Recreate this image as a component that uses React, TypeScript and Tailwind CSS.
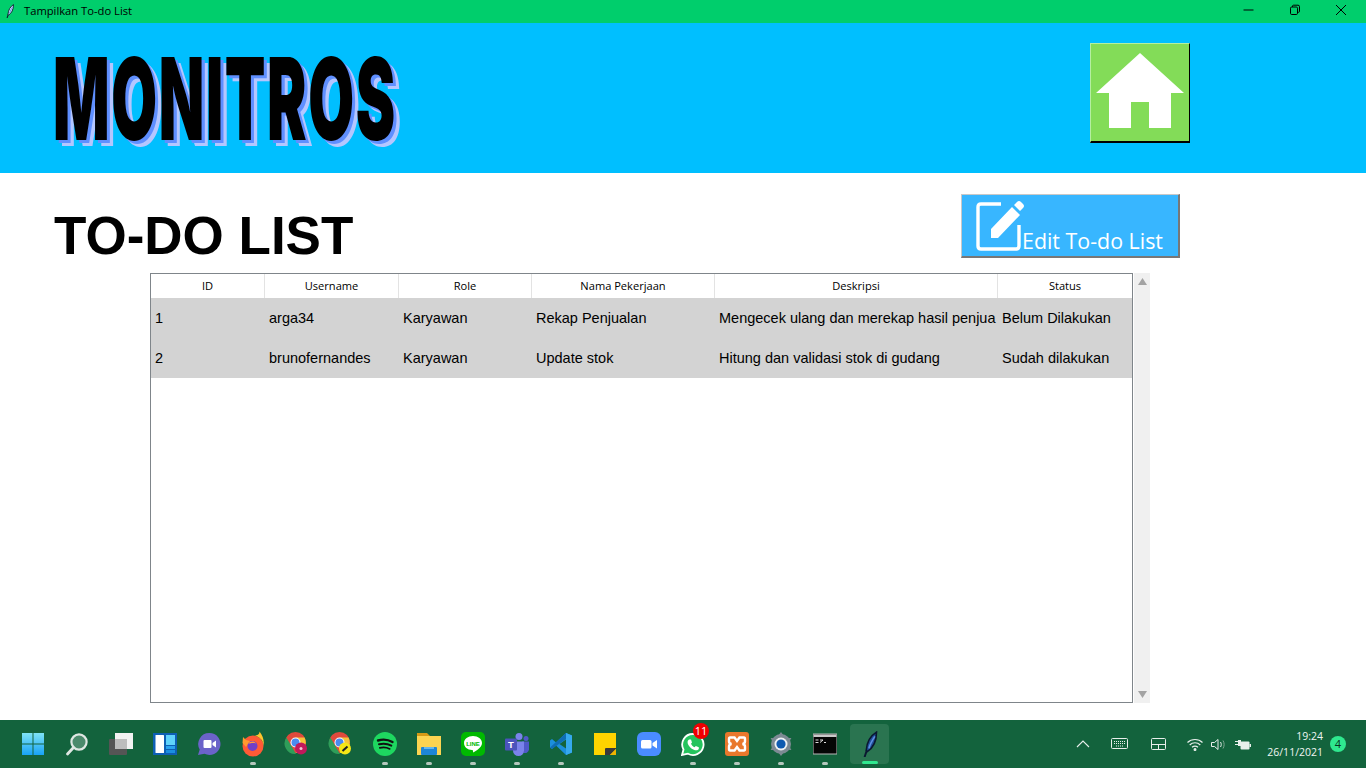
import type { ReactNode } from "react";

const columns = [
  { label: "ID", width: "w-[114px]" },
  { label: "Username", width: "w-[134px]" },
  { label: "Role", width: "w-[133px]" },
  { label: "Nama Pekerjaan", width: "w-[183px]" },
  { label: "Deskripsi", width: "w-[283px]" },
  { label: "Status", width: "w-[134px]" },
];

const rows = [
  ["1", "arga34", "Karyawan", "Rekap Penjualan", "Mengecek ulang dan merekap hasil penjua", "Belum Dilakukan"],
  ["2", "brunofernandes", "Karyawan", "Update stok", "Hitung dan validasi stok di gudang", "Sudah dilakukan"],
];

function Feather({ size = 14, fill = "#cfe0ff", vein = "#5f8fe0" }: { size?: number; fill?: string; vein?: string }) {
  return (
    <svg width={size} height={size} viewBox="0 0 24 24">
      <path d="M18 1C13 4 9 10 8.5 18l1 1c5-3 8.500-9 8.500-18z" fill={fill} stroke="#0b1830" strokeWidth="1.5" />
      <path d="M16.5 5c-2 3-4.500 7-5.500 11" fill="none" stroke={vein} strokeWidth="1.5" />
      <path d="M9 18L7 24" stroke="#0b1830" strokeWidth="1.8" />
    </svg>
  );
}

function TitleBar() {
  return (
    <div className="flex h-[23px] items-center justify-between bg-[#00ce6c]">
      <div className="flex items-center pl-[3px]">
        <Feather />
        <span className="ml-[7px] font-['Open_Sans',sans-serif] text-[11.2px] text-black">Tampilkan To-do List</span>
      </div>
      <div className="mt-[-3px] flex items-center pr-[2px] text-black">
        <div className="flex w-[46px] justify-center">
          <svg width="12" height="12" viewBox="0 0 12 12"><path d="M0.5 6h10" stroke="currentColor" /></svg>
        </div>
        <div className="flex w-[46px] justify-center">
          <svg width="12" height="12" viewBox="0 0 12 12" fill="none" stroke="currentColor">
            <rect x="1.5" y="3" width="7" height="7.5" rx="1.2" />
            <path d="M3.5 3V2.2q0-1 1-1h4.500q1.500 0 1.500 1.500v4.600q0 1-1 1h-1" />
          </svg>
        </div>
        <div className="flex w-[46px] justify-center">
          <svg width="12" height="12" viewBox="0 0 12 12"><path d="M1 1l10 10M11 1L1 11" stroke="currentColor" /></svg>
        </div>
      </div>
    </div>
  );
}

function Header() {
  return (
    <div className="flex h-[150px] items-start justify-between bg-[#00bfff] pl-[53px] pr-[176px]">
      <div className="mt-[21px] w-[343px] whitespace-nowrap">
        <span className="inline-block origin-left scale-x-[0.52] font-['Inter',sans-serif] text-[114px] leading-[110px] font-black tracking-[3px] text-black [text-shadow:6px_3px_0_#5f8fff,12px_6px_0_#b4c6ff]">
          MONITROS
        </span>
      </div>
      <button className="mt-[20px] flex h-[100px] w-[100px] items-center justify-center border-t border-r border-b-2 border-l border-t-[#b5efa0] border-r-black border-b-black border-l-[#b5efa0] bg-[#83dc58]">
        <svg width="98" height="97" viewBox="0 0 98 97" className="shrink-0">
          <path d="M49 9L93 49H80V84H58V58H40V84H18V49H5z" fill="#fff" />
        </svg>
      </button>
    </div>
  );
}

function TitleRow() {
  return (
    <div className="flex h-[100px] items-start justify-between pl-[54px] pr-[186px]">
      <h1 className="mt-[31px] font-['Liberation_Sans',sans-serif] text-[53px] leading-[64px] font-bold text-black">TO-DO LIST</h1>
      <button className="mt-[21px] flex h-[64px] w-[219px] items-end border-t border-r-2 border-b-2 border-l border-t-[#c8c8c8] border-r-[#777] border-b-[#777] border-l-[#c8c8c8] bg-[#38b6ff] pl-[14px] pb-[4px] text-white">
        <svg width="48" height="54" viewBox="0 0 48 54" fill="none" className="shrink-0">
          <path d="M25 6H5q-3 0-3 3v39q0 3 3 3h35q3 0 3-3V27" stroke="#fff" strokeWidth="3.4" />
          <path d="M15 40V31L36 9l8 8-22 23z M38 7l3-3q2-2 4 0l2 2q2 2 0 4l-3 3z" fill="#fff" />
        </svg>
        <span className="mb-[-3px] ml-[-2px] font-['Open_Sans',sans-serif] text-[21.4px] leading-[28px] font-medium whitespace-nowrap">Edit To-do List</span>
      </button>
    </div>
  );
}

function DataTable() {
  return (
    <div className="flex h-[430px] w-[1000px]">
      <div className="flex w-[983px] flex-col overflow-hidden border border-[#7f858a] bg-white">
        <div className="flex h-[24px] shrink-0">
          {columns.map((col) => (
            <div key={col.label} className={`${col.width} flex items-center justify-center border-r border-[#e3e3e3] font-['Open_Sans',sans-serif] text-[11.1px] text-black last:border-r-0`}>
              {col.label}
            </div>
          ))}
        </div>
        {rows.map((row) => (
          <div key={row[0]} className="flex h-[40px] shrink-0 bg-[#d3d3d3]">
            {row.map((cell, i) => (
              <div key={i} className={`${columns[i].width} overflow-hidden pl-[4px] font-['Liberation_Sans',sans-serif] text-[14.5px] leading-[40px] whitespace-nowrap text-black`}>
                {cell}
              </div>
            ))}
          </div>
        ))}
      </div>
      <div className="ml-[1px] flex w-[16px] flex-col items-center justify-between bg-[#f0f0f0] py-[5px]">
        <svg width="9" height="7" viewBox="0 0 9 7"><path d="M4.5 0L9 7H0z" fill="#a3a3a3" /></svg>
        <svg width="9" height="7" viewBox="0 0 9 7"><path d="M0 0h9L4.5 7z" fill="#a3a3a3" /></svg>
      </div>
    </div>
  );
}

function Chrome({ badge }: { badge: ReactNode }) {
  return (
    <svg width="26" height="26" viewBox="0 0 26 26">
      <circle cx="11.5" cy="11.5" r="10.5" fill="#df4a3c" />
      <path d="M2.4 6.5L8 16l4 6.900A10.500 10.500 0 0 1 2.4 6.5z" fill="#2f9e59" />
      <path d="M11.5 6.5h9A10.500 10.500 0 0 1 12 22z" fill="#f6c338" />
      <circle cx="11.5" cy="11.5" r="5" fill="#fff" />
      <circle cx="11.5" cy="11.5" r="4" fill="#4a8bf0" />
      {badge}
    </svg>
  );
}

const taskIcons: { id: string; dot?: boolean; node: ReactNode }[] = [
  {
    id: "start",
    node: (
      <svg width="24" height="24" viewBox="0 0 24 24">
        <defs>
          <linearGradient id="win" x1="0" y1="0" x2="0" y2="1">
            <stop offset="0" stopColor="#7fe3f5" />
            <stop offset="1" stopColor="#18a3f5" />
          </linearGradient>
        </defs>
        <path d="M1 1h10.5v10.5H1zM12.5 1H23v10.5H12.5zM1 12.5h10.5V23H1zM12.5 12.5H23V23H12.5z" fill="url(#win)" />
      </svg>
    ),
  },
  {
    id: "search",
    node: (
      <svg width="24" height="24" viewBox="0 0 24 24">
        <circle cx="14" cy="10" r="7.6" fill="#4b8a6c" stroke="#dfe7e3" strokeWidth="2.2" />
        <path d="M8.5 15.5L2.5 22" stroke="#dfe7e3" strokeWidth="2.8" strokeLinecap="round" />
      </svg>
    ),
  },
  {
    id: "taskview",
    node: (
      <svg width="24" height="24" viewBox="0 0 24 24">
        <rect x="0" y="7" width="18" height="16" rx="1" fill="#555" />
        <rect x="6" y="1" width="18" height="16" fill="#f2f2f2" />
        <rect x="6" y="7" width="12" height="10" fill="#bdbdbd" />
      </svg>
    ),
  },
  {
    id: "widgets",
    node: (
      <svg width="24" height="24" viewBox="0 0 24 24">
        <rect width="24" height="22" y="1" fill="#0d5fb4" />
        <rect x="2.5" y="3" width="8.5" height="18" rx="0.5" fill="#fff" />
        <rect x="13" y="3" width="9" height="10" fill="#5fd3fb" />
        <rect x="13" y="14" width="9" height="3" fill="#2aa3ee" />
        <rect x="13" y="18" width="9" height="3" fill="#1b8fe0" />
      </svg>
    ),
  },
  {
    id: "meet",
    node: (
      <svg width="24" height="24" viewBox="0 0 24 24">
        <path d="M12.5 1a11 11 0 1 1-5 20.800L1 23l1.700-5.500A11 11 0 0 1 12.5 1z" fill="#6b63c9" />
        <rect x="6.5" y="8" width="8" height="8" rx="1" fill="#fff" />
        <path d="M15.5 11l3.500-2.500v7L15.5 13z" fill="#fff" />
      </svg>
    ),
  },
  {
    id: "firefox",
    dot: true,
    node: (
      <svg width="24" height="26" viewBox="0 0 24 26">
        <circle cx="12" cy="15" r="10.5" fill="#ff5a36" />
        <path d="M12 4.5c5 0 10.500 4 10.500 10.500 1-5-.5-10-4-14.500 0 3-2 4-6.500 4z" fill="#ffc42e" />
        <path d="M1.5 12L2 6l3 3 4 1-4 6z" fill="#ff9a2e" />
        <circle cx="11.5" cy="15" r="5" fill="#6f3fc7" />
        <path d="M7 12.5c2-2 6-3 8 0-3-1-5 0-8 0z" fill="#ff9a3a" />
      </svg>
    ),
  },
  {
    id: "chrome-a",
    node: <Chrome badge={<g><circle cx="17" cy="17.5" r="6" fill="#c2185b" /><circle cx="17" cy="17.5" r="1.5" fill="#f4c2d6" /></g>} />,
  },
  {
    id: "chrome-b",
    node: <Chrome badge={<g><circle cx="17" cy="17.5" r="6" fill="#f6e616" /><path d="M14.5 20l5-4.500" stroke="#222" strokeWidth="2" /></g>} />,
  },
  {
    id: "spotify",
    dot: true,
    node: (
      <svg width="24" height="24" viewBox="0 0 24 24" fill="none">
        <circle cx="12" cy="12" r="12" fill="#1ed760" />
        <path d="M5 8.5c5-1.500 10-1 14.500 1.500" stroke="#111" strokeWidth="2.4" strokeLinecap="round" />
        <path d="M6 12.3c4.500-1.200 8.500-.7 12.300 1.300" stroke="#111" strokeWidth="2" strokeLinecap="round" />
        <path d="M6.8 15.8c3.800-.9 7-.5 10 1.100" stroke="#111" strokeWidth="1.7" strokeLinecap="round" />
      </svg>
    ),
  },
  {
    id: "explorer",
    dot: true,
    node: (
      <svg width="24" height="24" viewBox="0 0 24 24">
        <path d="M0 1h10l3 3H0z" fill="#d49a16" />
        <rect y="4" width="24" height="19" fill="#fbd451" />
        <rect x="4" y="15" width="16" height="8" rx="1" fill="#1d86d6" />
        <rect x="7" y="15" width="10" height="2" fill="#63b8ee" />
      </svg>
    ),
  },
  {
    id: "line",
    dot: true,
    node: (
      <svg width="24" height="24" viewBox="0 0 24 24">
        <rect width="24" height="24" rx="5" fill="#00b900" />
        <path d="M12 4c5 0 9 3 9 7 0 4-5 7.500-9 9.500 0-1.500.5-2.500-1-2.500-4.500 0-8-3-8-7s4-7 9-7z" fill="#fff" />
        <text x="12" y="13.5" textAnchor="middle" fontSize="6" fontWeight="700" fontFamily="Liberation Sans" fill="#00b900">LINE</text>
      </svg>
    ),
  },
  {
    id: "teams",
    dot: true,
    node: (
      <svg width="24" height="24" viewBox="0 0 24 24">
        <circle cx="14" cy="4.5" r="3.5" fill="#7b83eb" />
        <circle cx="21" cy="6.5" r="2.5" fill="#5059c9" />
        <path d="M17 9.5h7v8a4 4 0 0 1-6 3z" fill="#5059c9" />
        <path d="M8 9.5h11v9a5.500 5.500 0 0 1-11 0z" fill="#7b83eb" />
        <rect y="6.5" width="12" height="12" rx="1" fill="#4b53bc" />
        <text x="6" y="16" textAnchor="middle" fontSize="9.5" fontWeight="700" fontFamily="Liberation Sans" fill="#fff">T</text>
      </svg>
    ),
  },
  {
    id: "vscode",
    dot: true,
    node: (
      <svg width="24" height="24" viewBox="0 0 24 24">
        <path d="M17 1l6 2.500v17L17 23 7 13.500l-4 3.500-2-1.500V8.500L3 7l4 3.500z" fill="#1c8fdc" />
        <path d="M17 1l6 2.500v17L17 23z" fill="#36a9ee" />
        <path d="M17 7.5L10.500 12l6.500 4.500z" fill="#14633c" />
        <path d="M1 15.5L17 1v6L3 17z" fill="#0f6db3" />
      </svg>
    ),
  },
  {
    id: "notes",
    node: (
      <svg width="24" height="24" viewBox="0 0 24 24">
        <rect x="1" y="1" width="22" height="22" fill="#ffd400" />
        <path d="M12 23v-6q0-1 1-1h10v1l-6 6z" fill="#3a3a3a" />
        <path d="M17 23l6-6v6z" fill="#f0b400" />
      </svg>
    ),
  },
  {
    id: "zoom",
    node: (
      <svg width="24" height="24" viewBox="0 0 24 24">
        <rect width="24" height="24" rx="6" fill="#4a8cff" />
        <rect x="4" y="8" width="10.5" height="8.5" rx="1.5" fill="#fff" />
        <path d="M15.5 11l4.500-3v8.500l-4.500-3z" fill="#fff" />
      </svg>
    ),
  },
  {
    id: "whatsapp",
    dot: true,
    node: (
      <div className="relative h-[24px] w-[24px]">
        <svg width="24" height="24" viewBox="0 0 24 24">
          <path d="M12 2a10.500 10.500 0 1 1-5 19.700L1 23l1.500-5.500A10.500 10.500 0 0 1 12 2z" fill="#25c45e" stroke="#fff" strokeWidth="1.8" />
          <path d="M8 7.5l2 0 1 3-1 1.200c1 1.800 2 2.800 3.600 3.500l1.200-1.200 3 1.200v1.800c-1 1.500-3 1.500-5 .7-3-1.300-5-3.400-6-6-.5-2 0-3.500 1.200-4.200z" fill="#fff" />
        </svg>
        <span className="absolute top-[-9px] left-[12px] flex h-[16px] w-[16px] items-center justify-center rounded-full bg-[#f00000] font-['Open_Sans',sans-serif] text-[11px] text-white">11</span>
      </div>
    ),
  },
  {
    id: "xampp",
    dot: true,
    node: (
      <svg width="24" height="24" viewBox="0 0 24 24" fill="none">
        <rect width="24" height="24" rx="3" fill="#e9782c" />
        <path d="M5 5.5h4.500L12 9l2.500-3.500H19q1 0 1 1.500v2.500q0 2-2.500 2.500 2.500.5 2.500 2.500V17q0 1.500-1 1.500h-4.500L12 15l-2.500 3.500H5q-1 0-1-1.500v-2.500q0-2 2.500-2.500Q4 11.500 4 9.500V7q0-1.500 1-1.500z" stroke="#fff" strokeWidth="2.4" />
      </svg>
    ),
  },
  {
    id: "settings",
    dot: true,
    node: (
      <svg width="24" height="24" viewBox="0 0 24 24">
        <circle cx="12" cy="12" r="10" fill="#7d8a93" />
        <path d="M12 0l3 4h-6zM12 24l3-4h-6zM1.600 6l5 .2-2.500 4.300zM22.400 18l-5-.2 2.500-4.300zM1.600 18l2.500-4.300 2.500 4.300zM22.400 6l-2.500 4.300-2.500-4.300z" fill="#7d8a93" />
        <circle cx="12" cy="12" r="6.5" fill="#eef1f3" />
        <circle cx="12" cy="12" r="4.6" fill="#0f5bb0" />
      </svg>
    ),
  },
  {
    id: "cmd",
    dot: true,
    node: (
      <svg width="24" height="24" viewBox="0 0 24 24">
        <rect y="2" width="24" height="20" fill="#050505" stroke="#b9b9b9" />
        <rect x="0.5" y="2.5" width="23" height="2.5" fill="#c9c9c9" />
        <path d="M2.5 8h3M2.500 10.500h3M7 8h3M7 10.500l3-2.500M11 10.500h2" stroke="#ddd" strokeWidth="1" />
      </svg>
    ),
  },
];

function Taskbar() {
  return (
    <div className="flex h-[48px] items-center justify-between bg-[#13633d] pl-[11px]">
      <div className="flex items-center">
        {taskIcons.map((icon) => (
          <div key={icon.id} className="relative flex h-[40px] w-[44px] items-center justify-center">
            {icon.node}
            {icon.dot && <span className="absolute bottom-[-1px] h-[3px] w-[6px] rounded-full bg-[#b5c7bd]" />}
          </div>
        ))}
        <div className="relative ml-[3px] flex h-[40px] w-[39px] items-center justify-center rounded-[4px] bg-[#2a7450]">
          <Feather size={26} fill="#1f4f99" vein="#5f8fe0" />
          <span className="absolute bottom-[0px] h-[3px] w-[16px] rounded-full bg-[#2fe88f]" />
        </div>
      </div>
      <div className="flex items-center pr-[20px] text-white">
        <svg width="14" height="14" viewBox="0 0 14 14" fill="none" stroke="#e8efeb" strokeWidth="1.1" className="mr-[21px]"><path d="M1 10l6-6 6 6" /></svg>
        <svg width="18" height="12" viewBox="0 0 18 12" fill="none" stroke="#e8efeb" className="mr-[22px]">
          <rect x="0.5" y="0.5" width="16" height="10" rx="1" />
          <path d="M3 3.5h11M3 5.500h11M5 8h7" strokeDasharray="1 1" />
        </svg>
        <svg width="16" height="13" viewBox="0 0 16 13" fill="none" stroke="#e8efeb" className="mr-[20px]">
          <rect x="0.5" y="0.5" width="14" height="11" rx="1" />
          <path d="M0.5 6.500h14M7.500 6.500v5" />
        </svg>
        <svg width="16" height="13" viewBox="0 0 16 13" fill="none" stroke="#e8efeb" strokeWidth="1.2" className="mr-[8px]">
          <path d="M0.5 4.500c4-4 11-4 15 0M2.700 7c3-3 7.600-3 10.600 0M5 9.300c2-1.700 4-1.700 6 0" />
          <circle cx="8" cy="11.5" r="0.9" fill="#e8efeb" />
        </svg>
        <svg width="16" height="13" viewBox="0 0 16 13" fill="none" stroke="#e8efeb" className="mr-[8px]">
          <path d="M0.5 4.500h3l3.500-3v10l-3.500-3h-3z" />
          <path d="M9.5 4c1 1.500 1 3.500 0 5" />
          <path d="M12 2.500c1.500 2.500 1.500 5.500 0 8" stroke="#7fa692" />
        </svg>
        <svg width="16" height="13" viewBox="0 0 16 13" className="mr-[14px]">
          <path d="M0 3.500h3M0 6.500h3" stroke="#e8efeb" />
          <rect x="3" y="2" width="3" height="6" fill="#e8efeb" />
          <rect x="5.5" y="3.5" width="9" height="8" rx="1" fill="#e8efeb" />
          <rect x="14.5" y="6" width="1.5" height="3" fill="#e8efeb" />
        </svg>
        <div className="w-[58px] text-right font-['Open_Sans',sans-serif] text-[10.5px] leading-[16px] text-[#f0f5f2]">
          <div>19:24</div>
          <div className="whitespace-nowrap">26/11/2021</div>
        </div>
        <div className="ml-[7px] flex h-[16px] w-[16px] items-center justify-center rounded-full bg-[#2fe88f] font-['Open_Sans',sans-serif] text-[11px] text-[#0a3322]">4</div>
      </div>
    </div>
  );
}

export default function App() {
  return (
    <div className="flex h-screen w-full flex-col overflow-hidden bg-white">
      <TitleBar />
      <Header />
      <TitleRow />
      <div className="flex flex-1 pl-[150px]">
        <DataTable />
      </div>
      <div className="h-[17px] shrink-0" />
      <Taskbar />
    </div>
  );
}
